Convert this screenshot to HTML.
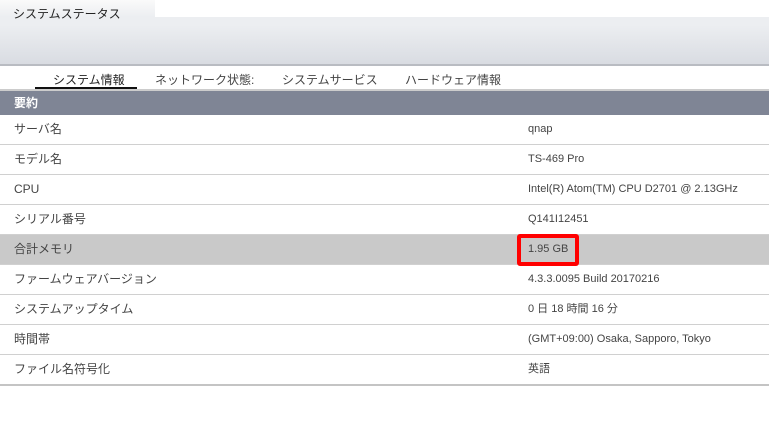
<!DOCTYPE html>
<html><head><meta charset="utf-8"><style>
body{margin:0;width:769px;height:442px;background:#fff;font-family:"Liberation Sans","Noto Sans CJK JP",sans-serif;position:relative;overflow:hidden;font-size:12px;color:#444}
.abs{position:absolute}
.row{position:absolute;left:0;width:769px;height:29px;border-bottom:1px solid #d0d0d0;line-height:29px}
.row .k{position:absolute;left:14px}
.row .v{position:absolute;left:528px;font-size:11px;color:#444}
</style></head><body>
<div class="abs" style="left:0;top:0;width:769px;height:25px;background:#fff"></div>
<div class="abs" style="left:0;top:0;width:155px;height:17px;background:linear-gradient(#fafafa,#eceef1)"></div>
<div class="abs" style="left:0;top:17px;width:769px;height:8px;background:#eceef1"></div>
<div class="abs" style="left:0;top:25px;width:769px;height:39px;background:linear-gradient(#eceef1,#d9dce2)"></div>
<div class="abs" style="left:0;top:64px;width:769px;height:2px;background:#b9bcc2"></div>
<div class="abs" style="left:13px;top:5px;font-size:12px;color:#222">システムステータス</div>
<div class="abs" style="left:53px;top:71px;color:#222">システム情報</div>
<div class="abs" style="left:155px;top:71px;color:#444">ネットワーク状態:</div>
<div class="abs" style="left:282px;top:71px;color:#444">システムサービス</div>
<div class="abs" style="left:405px;top:71px;color:#444">ハードウェア情報</div>
<div class="abs" style="left:35px;top:87px;width:102px;height:2px;background:#111"></div>
<div class="abs" style="left:0;top:89px;width:769px;height:2px;background:#ccc"></div>
<div class="abs" style="left:0;top:91px;width:769px;height:24px;background:#7f8595;color:#fff;font-weight:bold;line-height:24px"><span style="margin-left:14px">要約</span></div>
<div class="row" style="top:115px"><span class="k">サーバ名</span><span class="v">qnap</span></div>
<div class="row" style="top:145px"><span class="k">モデル名</span><span class="v">TS-469 Pro</span></div>
<div class="row" style="top:175px"><span class="k">CPU</span><span class="v">Intel(R) Atom(TM) CPU D2701 @ 2.13GHz</span></div>
<div class="row" style="top:205px"><span class="k">シリアル番号</span><span class="v">Q141I12451</span></div>
<div class="row" style="top:235px;background:#c9c9c9"><span class="k">合計メモリ</span><span class="v">1.95 GB</span></div>
<div class="row" style="top:265px"><span class="k">ファームウェアバージョン</span><span class="v">4.3.3.0095 Build 20170216</span></div>
<div class="row" style="top:295px"><span class="k">システムアップタイム</span><span class="v">0 日 18 時間 16 分</span></div>
<div class="row" style="top:325px"><span class="k">時間帯</span><span class="v">(GMT+09:00) Osaka, Sapporo, Tokyo</span></div>
<div class="row" style="top:355px;border-bottom:2px solid #c4c4c4"><span class="k">ファイル名符号化</span><span class="v">英語</span></div>
<div class="abs" style="left:517px;top:234px;width:54px;height:24px;border:4px solid #f00;border-radius:3px"></div>
</body></html>
